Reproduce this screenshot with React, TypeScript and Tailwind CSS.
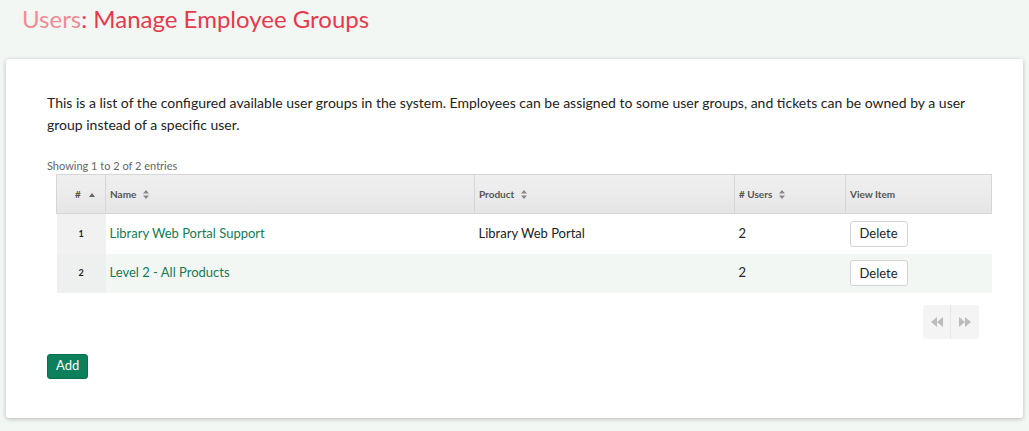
import React from 'react';

type Group = { id: number; name: string; product: string; users: number };

const groups: Group[] = [
  { id: 1, name: 'Library Web Portal Support', product: 'Library Web Portal', users: 2 },
  { id: 2, name: 'Level 2 - All Products', product: '', users: 2 },
];

const SortIcon = () => (
  <svg className="ml-[7px] inline-block" width="6" height="9" viewBox="0 0 6 9">
    <path d="M3 0L6 3.5H0z M3 9L0 5.5H6z" fill="#888" />
  </svg>
);

const SortUp = () => (
  <svg className="ml-[8px] inline-block" width="6" height="4" viewBox="0 0 6 4">
    <path d="M3 0L6 4H0z" fill="#666" />
  </svg>
);

const App: React.FC = () => {
  return (
    <div className="min-h-[431px] bg-[#f3f7f4] px-[6px] pb-[13px]" style={{ fontFamily: 'Lato, "Open Sans", sans-serif' }}>
      <h1 className="pl-[16px] pt-[3px] text-[24px] leading-[31px] text-[#e53a4b]">
        <span className="text-[#ef8c95]">Users</span>: Manage Employee Groups
      </h1>

      <div className="mt-[25px] rounded-[3px] bg-white pl-[41px] pr-[29px] pt-[33px] pb-[39px] shadow-[0_1px_4px_rgba(0,0,0,0.25)]">
        <p className="text-[14px] leading-[22px] text-[#222]">
          This is a list of the configured available user groups in the system. Employees can be assigned to some user groups, and tickets can be owned by a user group instead of a specific user.
        </p>

        <div className="mt-[23px] text-[11px] leading-[14px] text-[#666]">Showing 1 to 2 of 2 entries</div>

        <table className="ml-[9px] mt-[1px] w-[936px] border-collapse text-left">
          <thead>
            <tr className="h-[39px] bg-[linear-gradient(#efefef,#ececec_45%,#e4e4e4)] text-[10px] font-bold text-[#555]">
              <th className="w-[49px] border border-[#d6d6d6] pl-[18px] font-bold">
                #<SortUp />
              </th>
              <th className="w-[369px] border border-[#d6d6d6] pl-[4px] font-bold">
                Name<SortIcon />
              </th>
              <th className="w-[260px] border border-[#d6d6d6] pl-[4px] font-bold">
                Product<SortIcon />
              </th>
              <th className="w-[111px] border border-[#d6d6d6] pl-[4px] font-bold">
                # Users<SortIcon />
              </th>
              <th className="border border-[#d6d6d6] pl-[4px] font-bold">View Item</th>
            </tr>
          </thead>
          <tbody>
            {groups.map((g, i) => (
              <tr key={g.id} className={i % 2 === 1 ? 'h-[39px] bg-[#f3f7f4]' : 'h-[40px] bg-white'}>
                <td className={`text-center text-[9px] font-bold text-[#222] ${i % 2 === 1 ? 'bg-[#eef0ef]' : 'bg-[#f1f1f1]'}`}>{g.id}</td>
                <td className="pl-[4px] text-[13px] text-[#137a57]">{g.name}</td>
                <td className="pl-[4px] text-[13px] text-[#222]">{g.product}</td>
                <td className="pl-[4px] text-[13px] text-[#222]">{g.users}</td>
                <td className="pl-[4px]">
                  <button className="h-[26px] rounded-[3px] border border-[#d4d4d4] bg-white px-[9px] text-[13px] text-[#222]">
                    Delete
                  </button>
                </td>
              </tr>
            ))}
          </tbody>
        </table>

        <div className="mt-[12px] flex justify-end pr-[15px]">
          <div className="flex h-[34px] overflow-hidden rounded-[3px] bg-[#f4f4f4]">
            <div className="flex w-[28px] items-center justify-center border-r border-[#e6e6e6]">
              <svg width="12" height="10" viewBox="0 0 12 10">
                <path d="M6 0v10L0 5z M12 0v10L6 5z" fill="#bcbcbc" />
              </svg>
            </div>
            <div className="flex w-[28px] items-center justify-center">
              <svg width="12" height="10" viewBox="0 0 12 10">
                <path d="M0 0v10l6-5z M6 0v10l6-5z" fill="#bcbcbc" />
              </svg>
            </div>
          </div>
        </div>

        <button className="mt-[15px] h-[25px] rounded-[3px] border border-[#0b6e4d] bg-[#0b805a] px-[8px] text-[13px] text-white">
          Add
        </button>
      </div>
    </div>
  );
};

export default App;
